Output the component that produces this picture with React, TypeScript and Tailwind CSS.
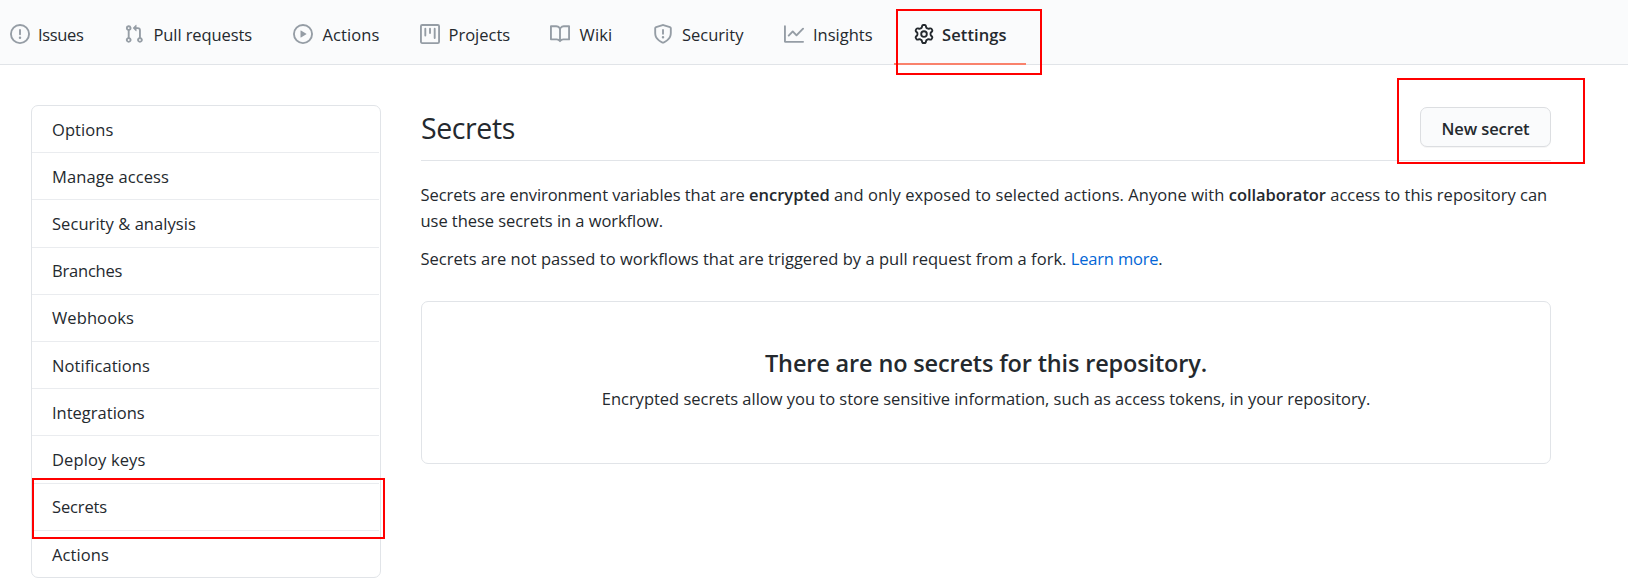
import type { ReactNode } from "react";

type IconName = "issue" | "pull" | "play" | "project" | "book" | "shield" | "graph" | "gear";

const ICONS: Record<IconName, string> = {
  issue:
    "M8 1.5a6.5 6.5 0 100 13 6.5 6.5 0 000-13zM0 8a8 8 0 1116 0A8 8 0 010 8zm9 3a1 1 0 11-2 0 1 1 0 012 0zm-.25-6.25a.75.75 0 00-1.5 0v3.5a.75.75 0 001.5 0v-3.5z",
  pull:
    "M7.177 3.073L9.573.677A.25.25 0 0110 .854v4.792a.25.25 0 01-.427.177L7.177 3.427a.25.25 0 010-.354zM3.75 2.5a.75.75 0 100 1.5.75.75 0 000-1.5zm-2.25.75a2.25 2.25 0 113 2.122v5.256a2.251 2.251 0 11-1.5 0V5.372A2.25 2.25 0 011.5 3.25zM11 2.5h-1V4h1a1 1 0 011 1v5.628a2.251 2.251 0 101.5 0V5A2.5 2.5 0 0011 2.5zm1 10.25a.75.75 0 111.5 0 .75.75 0 01-1.5 0zM3.75 12a.75.75 0 100 1.5.75.75 0 000-1.5z",
  play:
    "M1.5 8a6.5 6.5 0 1113 0 6.5 6.5 0 01-13 0zM8 0a8 8 0 100 16A8 8 0 008 0zM6.379 5.227A.25.25 0 006 5.442v5.117a.25.25 0 00.379.214l4.264-2.559a.25.25 0 000-.428L6.379 5.227z",
  project:
    "M1.75 0A1.75 1.75 0 000 1.75v12.5C0 15.216.784 16 1.75 16h12.5A1.75 1.75 0 0016 14.25V1.75A1.75 1.75 0 0014.25 0H1.75zM1.5 1.75a.25.25 0 01.25-.25h12.5a.25.25 0 01.25.25v12.5a.25.25 0 01-.25.25H1.75a.25.25 0 01-.25-.25V1.75zM11.75 3a.75.75 0 00-.75.75v7.5a.75.75 0 001.5 0v-7.5a.75.75 0 00-.75-.75zm-8.25.75a.75.75 0 011.5 0v5.5a.75.75 0 01-1.5 0v-5.5zM8 3a.75.75 0 00-.75.75v3.5a.75.75 0 001.5 0v-3.5A.75.75 0 008 3z",
  book:
    "M0 1.75A.75.75 0 01.75 1h4.253c1.227 0 2.317.59 3 1.501A3.744 3.744 0 0111.006 1h4.245a.75.75 0 01.75.75v10.5a.75.75 0 01-.75.75h-4.507a2.25 2.25 0 00-1.591.659l-.622.621a.75.75 0 01-1.06 0l-.622-.621A2.25 2.25 0 005.258 13H.75a.75.75 0 01-.75-.75V1.75zm8.755 3a2.25 2.25 0 012.25-2.25H14.5v9h-3.757c-.71 0-1.4.201-1.992.572l.004-7.322zm-1.504 7.324l.004-5.073-.002-2.253A2.25 2.25 0 005.003 2.5H1.5v9h3.757a3.75 3.75 0 011.994.574z",
  shield:
    "M7.467.133a1.75 1.75 0 011.066 0l5.25 1.68A1.75 1.75 0 0115 3.48V7c0 1.566-.32 3.182-1.303 4.682-.983 1.498-2.585 2.813-5.032 3.855a1.7 1.7 0 01-1.33 0c-2.447-1.042-4.049-2.357-5.032-3.855C1.32 10.182 1 8.566 1 7V3.48a1.75 1.75 0 011.217-1.667l5.25-1.68zm.61 1.429a.25.25 0 00-.153 0l-5.25 1.68a.25.25 0 00-.174.238V7c0 1.358.275 2.666 1.057 3.86.784 1.194 2.121 2.34 4.366 3.297a.2.2 0 00.154 0c2.245-.956 3.582-2.104 4.366-3.298C13.225 9.666 13.5 8.36 13.5 7V3.48a.25.25 0 00-.174-.237l-5.25-1.68zM9 10.5a1 1 0 11-2 0 1 1 0 012 0zm-.25-5.75a.75.75 0 10-1.5 0v3a.75.75 0 001.5 0v-3z",
  graph:
    "M1.5 1.75a.75.75 0 00-1.5 0v12.5c0 .414.336.75.75.75h14.5a.75.75 0 000-1.5H1.5V1.75zm14.28 2.53a.75.75 0 00-1.06-1.06L10 7.94 7.53 5.47a.75.75 0 00-1.06 0L3.22 8.72a.75.75 0 001.06 1.06L7 7.06l2.47 2.47a.75.75 0 001.06 0l5.25-5.25z",
  gear:
    "M7.429 1.525a6.593 6.593 0 011.142 0c.036.003.108.036.137.146l.289 1.105c.147.56.55.967.997 1.189.174.086.341.183.501.29.417.278.97.423 1.53.27l1.102-.303c.11-.03.175.016.195.046.219.31.41.641.573.989.014.031.022.11-.059.19l-.815.806c-.411.406-.562.957-.53 1.456a4.588 4.588 0 010 .582c-.032.499.119 1.05.53 1.456l.815.806c.08.08.073.159.059.19a6.494 6.494 0 01-.573.99c-.02.029-.086.074-.195.045l-1.103-.303c-.559-.153-1.112-.008-1.529.27-.16.107-.327.204-.5.29-.449.222-.851.628-.998 1.189l-.289 1.105c-.029.11-.101.143-.137.146a6.613 6.613 0 01-1.142 0c-.036-.003-.108-.037-.137-.146l-.289-1.105c-.147-.56-.55-.967-.997-1.189a4.502 4.502 0 01-.501-.29c-.417-.278-.97-.423-1.53-.27l-1.102.303c-.11.03-.175-.016-.195-.046a6.492 6.492 0 01-.573-.989c-.014-.031-.022-.11.059-.19l.815-.806c.411-.406.562-.957.53-1.456a4.587 4.587 0 010-.582c.032-.499-.119-1.05-.53-1.456l-.815-.806c-.08-.08-.073-.159-.059-.19a6.44 6.44 0 01.573-.99c.02-.029.086-.075.195-.045l1.103.303c.559.153 1.112.008 1.529-.27.16-.107.327-.204.5-.29.449-.222.851-.628.998-1.189l.289-1.105c.029-.11.101-.143.137-.146zM8 0c-.236 0-.47.01-.701.03-.743.065-1.29.615-1.458 1.261l-.29 1.106c-.017.066-.078.158-.211.224a5.994 5.994 0 00-.668.386c-.123.082-.233.09-.3.071L3.27 2.776c-.644-.177-1.392.02-1.82.63a7.977 7.977 0 00-.704 1.217c-.315.675-.111 1.422.363 1.891l.815.806c.05.048.098.147.088.294a6.084 6.084 0 000 .772c.01.147-.038.246-.088.294l-.815.806c-.474.469-.678 1.216-.363 1.891.2.428.436.835.704 1.218.428.609 1.176.806 1.82.63l1.103-.303c.066-.019.176-.011.299.071.213.143.436.272.668.386.133.066.194.158.212.224l.289 1.106c.169.646.715 1.196 1.458 1.26a8.094 8.094 0 001.402 0c.743-.064 1.29-.614 1.458-1.26l.29-1.106c.017-.066.078-.158.211-.224a5.98 5.98 0 00.668-.386c.123-.082.233-.09.3-.071l1.102.302c.644.177 1.392-.02 1.82-.63.268-.382.505-.789.704-1.217.315-.675.111-1.422-.364-1.891l-.814-.806c-.05-.048-.098-.147-.088-.294a6.1 6.1 0 000-.772c-.01-.147.039-.246.088-.294l.814-.806c.475-.469.679-1.216.364-1.891a7.992 7.992 0 00-.704-1.218c-.428-.609-1.176-.806-1.82-.63l-1.103.303c-.066.019-.176.011-.299-.071a5.991 5.991 0 00-.668-.386c-.133-.066-.194-.158-.212-.224L10.16 1.29C9.99.645 9.444.095 8.701.031A8.094 8.094 0 008 0zm1.5 8a1.5 1.5 0 11-3 0 1.5 1.5 0 013 0zM11 8a3 3 0 11-6 0 3 3 0 016 0z",
};

function Icon({ name, className }: { name: IconName; className: string }) {
  return (
    <svg viewBox="0 0 16 16" className={`size-5 shrink-0 fill-current ${className}`} aria-hidden="true">
      <path fillRule="evenodd" d={ICONS[name]} />
    </svg>
  );
}

const TABS: { label: string; icon: IconName; box: string; text?: string }[] = [
  { label: "Issues", icon: "issue", box: "w-[114px] gap-2", text: "tracking-[-0.35px]" },
  { label: "Pull requests", icon: "pull", box: "w-[169px] gap-[9.5px]", text: "tracking-[-0.1px]" },
  { label: "Actions", icon: "play", box: "w-[127px] gap-[9.5px]", text: "tracking-[0.1px]" },
  { label: "Projects", icon: "project", box: "w-[130px] gap-[8.5px]" },
  { label: "Wiki", icon: "book", box: "w-[103px] gap-[9.5px]", text: "tracking-[0.15px]" },
  { label: "Security", icon: "shield", box: "w-[131px] gap-[9px]" },
  { label: "Insights", icon: "graph", box: "w-[110px] gap-[9px]" },
];

const MENU: { label: string; text?: string }[] = [
  { label: "Options", text: "tracking-[0.09px]" },
  { label: "Manage access", text: "tracking-[0.09px]" },
  { label: "Security & analysis", text: "tracking-[0.06px]" },
  { label: "Branches", text: "tracking-[-0.2px]" },
  { label: "Webhooks", text: "tracking-[0.1px]" },
  { label: "Notifications", text: "tracking-[0.06px]" },
  { label: "Integrations" },
  { label: "Deploy keys", text: "tracking-[0.13px]" },
  { label: "Secrets", text: "tracking-[-0.13px]" },
  { label: "Actions", text: "tracking-[0.1px]" },
];

function Marker({ className }: { className: string }) {
  return <div className={`pointer-events-none absolute border-2 border-[#ff0000] ${className}`} />;
}

function Strong({ children, className = "" }: { children: ReactNode; className?: string }) {
  return <strong className={`font-semibold ${className}`}>{children}</strong>;
}

export default function App() {
  return (
    <div className="relative h-[588px] w-[1628px] overflow-hidden bg-white font-['Open_Sans',sans-serif] text-[16.5px] leading-[26px] text-[#24292e]">
      <nav className="flex h-[65px] border-b border-[#e1e4e8] bg-[#fafbfc] pl-[10px]">
        {TABS.map((tab) => (
          <a key={tab.label} className={`flex h-[68px] items-center ${tab.box}`}>
            <Icon name={tab.icon} className="text-[#959da5]" />
            <span className={`whitespace-nowrap pt-px ${tab.text ?? ""}`}>{tab.label}</span>
          </a>
        ))}
        <a className="flex h-[65px] w-[132px] items-center gap-2 border-b-2 border-[#f9826c] pt-[5px] pl-5">
          <Icon name="gear" className="text-[#24292e]" />
          <span className="pt-px font-semibold tracking-[0.1px]">Settings</span>
        </a>
      </nav>

      <div className="flex items-start pt-10 pl-[31px]">
        <aside className="h-[473px] w-[350px] rounded-[7px] border border-[#e1e4e8] pr-px">
          {MENU.map((item, i) => (
            <a
              key={item.label}
              className={`flex h-[47.2px] items-center pt-px pl-5 ${
                i < MENU.length - 1 ? "border-b border-[#eaecef]" : ""
              }`}
            >
              <span className={item.text ?? ""}>{item.label}</span>
            </a>
          ))}
        </aside>

        <main className="ml-10 w-[1130px]">
          <header className="flex h-14 justify-between border-b border-[#e1e4e8]">
            <h2 className="text-[28.5px] leading-[46px] tracking-[-0.4px]">Secrets</h2>
            <button className="mt-[2px] flex h-10 w-[131px] items-center justify-center rounded-[7px] border border-[#dcdee1] bg-[#fafbfc] pt-[3px] font-semibold tracking-[-0.1px] shadow-[0_1px_0_rgba(27,31,35,0.04)]">
              New secret
            </button>
          </header>

          <p className="mt-[21px] -ml-[0.5px] whitespace-nowrap">
            <span className="tracking-[-0.06px]">Secrets are environment variables that are </span>
            <Strong>encrypted</Strong>
            <span className="tracking-[0.07px]"> and only exposed to selected actions. Anyone with </span>
            <Strong className="tracking-[-0.06px]">collaborator</Strong>
            <span> access to this repository can</span>
            <br />
            <span className="tracking-[-0.05px]">use these secrets in a workflow.</span>
          </p>
          <p className="mt-3 -ml-[0.5px] whitespace-nowrap">
            <span className="tracking-[0.03px]">
              Secrets are not passed to workflows that are triggered by a pull request from a fork.{" "}
            </span>
            <a className="tracking-[-0.19px] text-[#0366d6]">Learn more</a>.
          </p>

          <section className="mt-[29px] flex h-[163px] flex-col items-center rounded-[7px] border border-[#e1e4e8] pt-[43px]">
            <h3 className="text-[23.5px] leading-[36px] font-semibold tracking-[-0.155px]">
              There are no secrets for this repository.
            </h3>
            <p className="mt-[5px] tracking-[-0.015px]">
              Encrypted secrets allow you to store sensitive information, such as access tokens, in your repository.
            </p>
          </section>
        </main>
      </div>

      <Marker className="top-[9px] left-[896px] h-[66px] w-[146px]" />
      <Marker className="top-[78px] left-[1397px] h-[86px] w-[188px]" />
      <Marker className="top-[478px] left-[32px] h-[61px] w-[353px]" />
    </div>
  );
}
